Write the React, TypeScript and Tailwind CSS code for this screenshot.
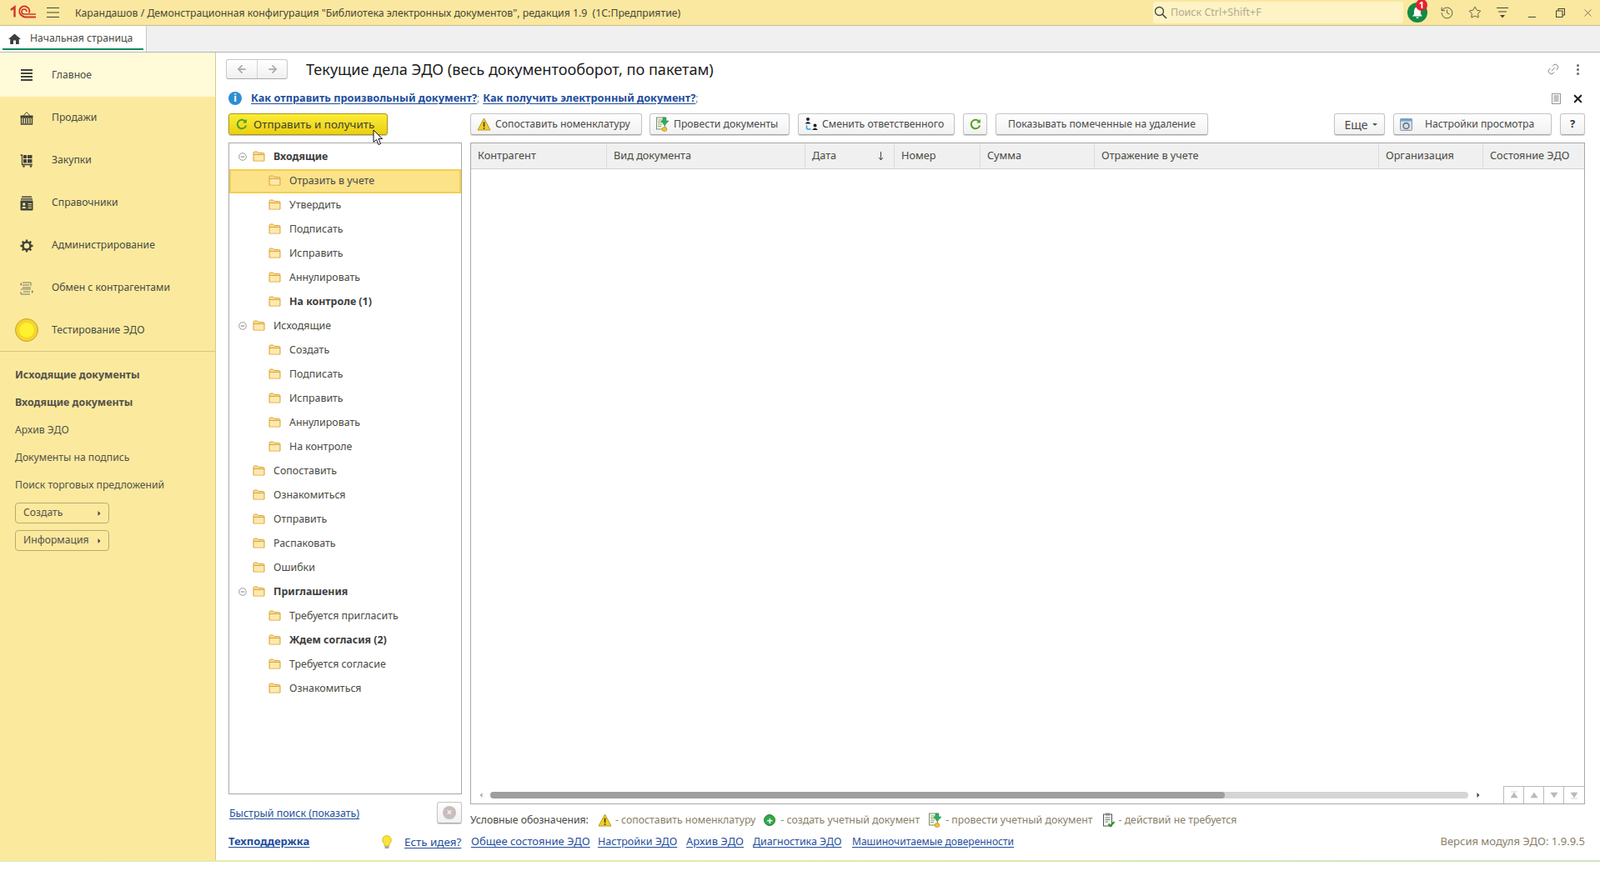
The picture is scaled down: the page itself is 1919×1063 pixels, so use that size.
import React from 'react';
import { ArrowLeft, ArrowRight, History, Link2, Star, X } from 'lucide-react';

const Folder: React.FC = () => (
  <svg width="15" height="13" viewBox="0 0 15 13" className="shrink-0">
    <path d="M1 2.5 Q1 1 2.5 1 H5.5 L7 2.5 H12.5 Q14 2.5 14 4 V12 H1 Z" fill="#FCDD8E" stroke="#D8A53E" strokeWidth="1" />
    <path d="M1 4.5 H14" stroke="#D8A53E" strokeWidth="1" />
    <rect x="2" y="5" width="11" height="6.5" fill="#FFE9AE" />
  </svg>
);

const Warning: React.FC = () => (
  <svg width="17" height="16" viewBox="0 0 17 16" className="shrink-0">
    <path d="M8.5 1 L16 15 H1 Z" fill="#F2CF2F" stroke="#B59A1E" strokeWidth="1" strokeLinejoin="round" />
    <rect x="7.7" y="5.5" width="1.7" height="5.5" fill="#4A3E10" />
    <rect x="7.7" y="12" width="1.7" height="1.7" fill="#4A3E10" />
  </svg>
);

const Refresh: React.FC<{ size?: number }> = ({ size = 14 }) => (
  <svg width={size} height={size} viewBox="0 0 14 14" className="shrink-0">
    <path d="M11.6 4.2 A5.3 5.3 0 1 0 12.2 8.5" fill="none" stroke="#4FA31A" strokeWidth="2" />
    <path d="M12.8 0.8 V5.6 H8.2 Z" fill="#4FA31A" />
  </svg>
);

const DocPost: React.FC = () => (
  <svg width="17" height="18" viewBox="0 0 17 18" className="shrink-0">
    <rect x="1.5" y="1" width="10" height="14" fill="#F4F7EE" stroke="#7E8F6A" />
    <path d="M3 4 H10 M3 6.5 H8 M3 9 H8 M3 11.5 H7" stroke="#8AA070" />
    <path d="M9 1 H13 V5 H16 L11 10.5 L7 5 H9 Z" fill="#2FAE5E" stroke="#1D7F44" strokeWidth="0.5" />
    <ellipse cx="11" cy="15" rx="3" ry="2.5" fill="#F2C230" stroke="#B58A18" strokeWidth="0.6" />
  </svg>
);

const DocDone: React.FC = () => (
  <svg width="17" height="18" viewBox="0 0 17 18" className="shrink-0">
    <rect x="2.5" y="2" width="10" height="14" fill="#F7F7F2" stroke="#555" />
    <rect x="5" y="0.5" width="5" height="3" fill="#888" />
    <path d="M4.5 6 H10.5 M4.5 8.5 H10.5 M4.5 11 H8" stroke="#777" />
    <path d="M8.5 13.5 L10.8 16 L15.5 11" fill="none" stroke="#1F9A2E" strokeWidth="2" />
  </svg>
);

const TeamSwap: React.FC = () => (
  <svg width="18" height="18" viewBox="0 0 18 18" className="shrink-0">
    <circle cx="5" cy="3" r="2" fill="#222" />
    <path d="M1.5 8.5 Q5 3.5 8.5 8.5 Z" fill="#222" />
    <circle cx="13.5" cy="10.5" r="2" fill="#222" />
    <path d="M10 16 Q13.5 11 17 16 Z" fill="#222" />
    <path d="M3.5 10.5 V14 Q3.5 15 6 15 H8.5" fill="none" stroke="#2F9FE0" strokeWidth="1.5" />
  </svg>
);

const Logo: React.FC = () => (
  <svg width="31" height="18" viewBox="0 0 31 18" className="shrink-0">
    <path d="M1 6 L5.5 2.5 V14.5" fill="none" stroke="#D1342B" strokeWidth="2.4" />
    <path d="M23 9.5 A6 6 0 1 0 14 12.5 Q15.5 14 18 14.5 H31" fill="none" stroke="#D1342B" strokeWidth="2" />
    <path d="M20 8 A3 3 0 1 0 17 11 H31" fill="none" stroke="#D1342B" strokeWidth="1.6" />
  </svg>
);

const icons: Record<string, React.ReactNode> = {
  main: (
    <svg width="16" height="16" viewBox="0 0 16 16"><path d="M1 2 H15 M1 6 H15 M1 10 H15 M1 14 H15" stroke="#43433B" strokeWidth="2" /></svg>
  ),
  sales: (
    <svg width="16" height="16" viewBox="0 0 16 16">
      <path d="M4 5 L8 0.5 L12 5" fill="none" stroke="#43433B" />
      <path d="M0.5 4.5 H15.5 V7 H0.5 Z" fill="#43433B" />
      <path d="M1.5 7 H14.5 V15 H1.5 Z M4 8 V14 M6.7 8 V14 M9.3 8 V14 M12 8 V14" fill="none" stroke="#43433B" strokeWidth="1.4" />
    </svg>
  ),
  buy: (
    <svg width="16" height="16" viewBox="0 0 16 16">
      <path d="M0.5 1 H2.5 V12.5 H15" fill="none" stroke="#43433B" strokeWidth="1.3" />
      <path d="M4 1 H8 V5 H4 Z M9 1 H14.5 V5 H9 Z M4 6 H8 V10.5 H4 Z M9 6 H14.5 V10.5 H9 Z" fill="#43433B" />
      <circle cx="4.5" cy="14.5" r="1.3" fill="#43433B" />
      <circle cx="13" cy="14.5" r="1.3" fill="#43433B" />
    </svg>
  ),
  ref: (
    <svg width="16" height="18" viewBox="0 0 16 18">
      <path d="M2 0.5 H14 V2 H2 Z" fill="#43433B" />
      <path d="M1 3 H15 V4.5 H1 Z" fill="#43433B" />
      <rect x="0.5" y="5.5" width="15" height="12" rx="1" fill="#43433B" />
      <circle cx="4.8" cy="10" r="1.7" fill="#FBEA9E" />
      <path d="M2 15 Q4.8 10.5 7.6 15 Z" fill="#FBEA9E" />
      <path d="M9.5 9.5 H14 M9.5 12 H14 M9.5 14.5 H14" stroke="#FBEA9E" />
    </svg>
  ),
  admin: (
    <svg width="16" height="16" viewBox="0 0 16 16">
      <circle cx="8" cy="8" r="4.5" fill="none" stroke="#43433B" strokeWidth="2.6" />
      <path d="M8 0.5 V3 M8 13 V15.5 M0.5 8 H3 M13 8 H15.5 M2.7 2.7 L4.5 4.5 M11.5 11.5 L13.3 13.3 M2.7 13.3 L4.5 11.5 M11.5 4.5 L13.3 2.7" stroke="#43433B" strokeWidth="2.4" />
    </svg>
  ),
  swap: (
    <svg width="16" height="16" viewBox="0 0 16 16">
      <path d="M3 1 H13 V5 M3 4 H11 M3 7 H13 M1 9 H13 M1 12 V15 H12 M4 12 H12" fill="none" stroke="#77776A" />
      <path d="M2 1 V5 L0 3 Z M14 10 V14 L16 12 Z" fill="#77776A" />
    </svg>
  ),
};

const navItems = [
  { label: 'Продажи', icon: 'sales' },
  { label: 'Закупки', icon: 'buy' },
  { label: 'Справочники', icon: 'ref' },
  { label: 'Администрирование', icon: 'admin' },
  { label: 'Обмен с контрагентами', icon: 'swap' },
];

const treeRows: { label: string; level: number; bold?: boolean; open?: boolean; active?: boolean }[] = [
  { label: 'Входящие', level: 1, bold: true, open: true },
  { label: 'Отразить в учете', level: 2, active: true },
  { label: 'Утвердить', level: 2 },
  { label: 'Подписать', level: 2 },
  { label: 'Исправить', level: 2 },
  { label: 'Аннулировать', level: 2 },
  { label: 'На контроле (1)', level: 2, bold: true },
  { label: 'Исходящие', level: 1, open: true },
  { label: 'Создать', level: 2 },
  { label: 'Подписать', level: 2 },
  { label: 'Исправить', level: 2 },
  { label: 'Аннулировать', level: 2 },
  { label: 'На контроле', level: 2 },
  { label: 'Сопоставить', level: 1 },
  { label: 'Ознакомиться', level: 1 },
  { label: 'Отправить', level: 1 },
  { label: 'Распаковать', level: 1 },
  { label: 'Ошибки', level: 1 },
  { label: 'Приглашения', level: 1, bold: true, open: true },
  { label: 'Требуется пригласить', level: 2 },
  { label: 'Ждем согласия (2)', level: 2, bold: true },
  { label: 'Требуется согласие', level: 2 },
  { label: 'Ознакомиться', level: 2 },
];

const columns = [
  { label: 'Контрагент', w: 'w-[163px]' },
  { label: 'Вид документа', w: 'w-[238px]' },
  { label: 'Дата', w: 'w-[107px]', sort: true },
  { label: 'Номер', w: 'w-[103px]' },
  { label: 'Сумма', w: 'w-[137px]' },
  { label: 'Отражение в учете', w: 'w-[341px]' },
  { label: 'Организация', w: 'w-[125px]' },
  { label: 'Состояние ЭДО', w: 'flex-1' },
];

const bottomLinks = [
  { label: 'Есть идея?', cls: 'w-[80px] text-[13.4px]' },
  { label: 'Общее состояние ЭДО', cls: 'w-[152px] text-[13px]' },
  { label: 'Настройки ЭДО', cls: 'w-[106px] text-[12.5px]' },
  { label: 'Архив ЭДО', cls: 'w-[80px] text-[13px]' },
  { label: 'Диагностика ЭДО', cls: 'w-[119px] text-[12.4px]' },
  { label: 'Машиночитаемые доверенности', cls: 'text-[12px]' },
];

const btn =
  'h-[26px] flex items-center rounded-[3px] border border-[#c4c4c4] border-b-[#a8a8a8] bg-gradient-to-b from-white to-[#f1f1f1] shadow-[0_1px_1px_rgba(0,0,0,0.18)] text-[#4a4a4a] text-[12.2px] shrink-0';
const link = 'text-[#1F4E9C] underline underline-offset-2';

const App: React.FC = () => {
  return (
    <div className="w-[1919px] h-[1063px] flex flex-col bg-white overflow-hidden text-[12.2px] text-[#4a4a44] [font-family:'Liberation_Sans',Arial,sans-serif]">
      {/* top bar */}
      <div className="h-[31px] shrink-0 flex items-center bg-[#FAE8A0] border-b border-[#C9BE8C]">
        <div className="w-[90px] shrink-0 flex items-center pl-[12px] gap-[13px]">
          <Logo />
          <svg width="15" height="14" viewBox="0 0 15 14"><path d="M0 1.5 H15 M0 7 H15 M0 12.5 H15" stroke="#4A4430" strokeWidth="1.2" /></svg>
        </div>
        <div className="flex-1 min-w-0 text-[#4a4638] text-[12.25px] whitespace-nowrap pt-[2px]">
          Карандашов / Демонстрационная конфигурация "Библиотека электронных документов", редакция 1.9&nbsp; (1С:Предприятие)
        </div>
        <div className="w-[300px] h-[26px] rounded-[3px] bg-[#FDF3C4] flex items-center pl-[1px] gap-[4px] text-[#b0ab95] text-[12.5px]">
          <svg width="16" height="16" viewBox="0 0 16 16"><circle cx="6.5" cy="6.5" r="5" fill="none" stroke="#444" strokeWidth="1.3" /><path d="M10 10 L15 15" stroke="#444" strokeWidth="1.6" /></svg>
          Поиск Ctrl+Shift+F
        </div>
        <div className="relative ml-[5px] w-[24px] h-[24px] rounded-full bg-[#128A45] flex items-center justify-center">
          <svg width="16" height="16" viewBox="0 0 16 16"><path d="M8 1 Q12 2 12 7 V10 L14 12.5 H2 L4 10 V7 Q4 2 8 1 Z M6 13.5 H10 L8 15.5 Z" fill="#fff" /></svg>
          <span className="absolute -top-[4px] left-[10px] w-[14px] h-[14px] rounded-full bg-[#E5222E] text-white text-[11px] font-bold leading-[14px] text-center">1</span>
        </div>
        <History className="ml-[15px] text-[#4a4638]" size={17} strokeWidth={1.2} />
        <Star className="ml-[17px] text-[#4a4638]" size={16} strokeWidth={1.3} />
        <svg className="ml-[17px]" width="16" height="14" viewBox="0 0 16 14"><path d="M1 1.5 H15 M3 6 H13" stroke="#4a4638" strokeWidth="1.2" /><path d="M5 10 H11 L8 13.5 Z" fill="#4a4638" /></svg>
        <div className="ml-[18px] w-[18px] flex justify-center pt-[11px]"><div className="w-[9px] h-[1.5px] bg-[#4a4638]" /></div>
        <svg className="ml-[20px]" width="11" height="11" viewBox="0 0 11 11"><path d="M0.5 3 H8 V10.5 H0.5 Z M3 3 V0.5 H10.5 V8 H8" fill="none" stroke="#4a4638" strokeWidth="1.1" /></svg>
        <X className="ml-[20px] mr-[7px] text-[#4a4638]" size={15} strokeWidth={1.1} />
      </div>

      {/* tabs */}
      <div className="h-[32px] shrink-0 flex bg-[#F0F0F0] border-b border-[#B4B4B4]">
        <div className="w-[176px] bg-white border-r border-[#C8C8C8] px-[3px] flex flex-col">
          <div className="flex-1 flex items-center pl-[7px] gap-[11px] pt-[3px] text-[#4a4a44]">
            <svg width="15" height="13" viewBox="0 0 15 13"><path d="M7.5 0.5 L15 7 H12.8 V13 H9 V8.5 H6 V13 H2.2 V7 H0 Z" fill="#3E3E3E" /></svg>
            <span>Начальная страница</span>
          </div>
          <div className="h-[2px] mb-[2px] bg-[#128A55]" />
        </div>
      </div>

      {/* body */}
      <div className="h-[969px] shrink-0 flex">
        <aside className="w-[259px] shrink-0 bg-[#FBEA9E] border-r border-[#D7C98C] flex flex-col">
          <div className="h-[53px] pt-[1px] bg-[#FFFBD8] flex items-center">
            <div className="w-[62px] pl-[24px]">{icons.main}</div>
            Главное
          </div>
          {navItems.map((n) => (
            <div key={n.label} className="h-[51px] flex items-center">
              <div className="w-[62px] pl-[24px]">{icons[n.icon]}</div>
              {n.label}
            </div>
          ))}
          <div className="h-[51px] flex items-center border-b border-[#D9C67E]">
            <div className="w-[62px] pl-[18px]">
              <div className="w-[28px] h-[28px] rounded-full bg-[#F6D32E] border border-[#C9A21F] flex items-center justify-center">
                <div className="w-[18px] h-[18px] rounded-full bg-[#FFF12E]" />
              </div>
            </div>
            Тестирование ЭДО
          </div>
          <div className="pl-[18px] pt-[12px] flex flex-col text-[#55524a]">
            <div className="h-[33px] flex items-center font-bold text-[12.4px]">Исходящие документы</div>
            <div className="h-[33px] flex items-center font-bold text-[12.4px]">Входящие документы</div>
            <div className="h-[33px] flex items-center">Архив ЭДО</div>
            <div className="h-[33px] flex items-center">Документы на подпись</div>
            <div className="h-[33px] flex items-center">Поиск торговых предложений</div>
            {['Создать', 'Информация'].map((b, i) => (
              <div key={b} className={`w-[113px] h-[25px] rounded-[4px] border border-[#B8AB72] flex items-center justify-between px-[9px] ${i === 0 ? 'mt-[4px]' : 'mt-[8px]'}`}>
                {b}
                <svg width="4" height="6" viewBox="0 0 4 6"><path d="M0.5 0 L3.5 3 L0.5 6 Z" fill="#4a4a44" /></svg>
              </div>
            ))}
          </div>
        </aside>

        <main className="flex-1 min-w-0 flex flex-col pl-[1px] pr-[18px]">
          {/* title row */}
          <div className="h-[24px] mt-[8px] pl-[11px] flex items-center">
            <div className="w-[74px] h-[24px] flex rounded-[3px] border border-[#c8c8c8] border-b-[#aaa] bg-gradient-to-b from-white to-[#f0f0f0]">
              <div className="w-[37px] flex items-center justify-center border-r border-[#d4d4d4]"><ArrowLeft size={14} strokeWidth={3} className="text-[#aaaaaa]" /></div>
              <div className="flex-1 flex items-center justify-center"><ArrowRight size={14} strokeWidth={3} className="text-[#aaaaaa]" /></div>
            </div>
            <h1 className="ml-[22px] flex-1 pt-[1px] text-[18.1px] text-[#1c1c1c] whitespace-nowrap">Текущие дела ЭДО (весь документооборот, по пакетам)</h1>
            <Link2 size={16} strokeWidth={1} className="text-[#555] -rotate-45 mr-[20px]" />
            <div className="flex flex-col gap-[2px] mr-[7px]">
              <div className="w-[3px] h-[3px] rounded-full bg-[#666]" />
              <div className="w-[3px] h-[3px] rounded-full bg-[#666]" />
              <div className="w-[3px] h-[3px] rounded-full bg-[#666]" />
            </div>
          </div>

          {/* info row */}
          <div className="h-[20px] mt-[13px] pl-[14px] flex items-center">
            <div className="w-[16px] h-[16px] rounded-full bg-[#2E8FD0] text-white text-[12px] font-bold leading-[16px] text-center [font-family:'Liberation_Serif',serif]">i</div>
            <a className={`${link} ml-[11px] font-bold text-[12.75px]`}>Как отправить произвольный документ?</a>
            <span className="text-[#888]">;</span>
            <a className={`${link} ml-[4px] font-bold text-[12.75px]`}>Как получить электронный документ?</a>
            <span className="text-[#888]">;</span>
            <div className="flex-1" />
            <svg className="mr-[13px]" width="11" height="13" viewBox="0 0 11 13"><rect x="0.5" y="0.5" width="10" height="12" fill="#fafafa" stroke="#999" /><path d="M2.5 3 H8.5 M2.5 5 H8.5 M2.5 7 H8.5 M2.5 9 H8.5" stroke="#888" /></svg>
            <X size={15} strokeWidth={3.4} className="text-[#222] mr-[1px]" />
          </div>

          {/* command row */}
          <div className="h-[26px] mt-[8px] pl-[14px] flex items-center">
            <div className="relative w-[191px] h-[26px] flex items-center pl-[8px] gap-[7px] rounded-[3px] border border-[#A8951F] bg-gradient-to-b from-[#FBEC36] to-[#EBD00C] shadow-[0_1px_1px_rgba(0,0,0,0.25)] text-[#3f3f30] shrink-0">
              <Refresh />
              <span className="text-[13.4px]">Отправить и получить</span>
              <svg className="absolute left-[172px] top-[18px]" width="13" height="20" viewBox="0 0 13 20"><path d="M1 1 V15.5 L4.5 12.5 L7 18.5 L9.5 17.5 L7 11.5 H11.5 Z" fill="#fff" stroke="#111" strokeWidth="1" /></svg>
            </div>
            <div className={`${btn} ml-[99px] w-[206px] pl-[7px] gap-[5px]`}><Warning /><span>Сопоставить номенклатуру</span></div>
            <div className={`${btn} ml-[9px] w-[168px] pl-[6px] gap-[5px]`}><DocPost /><span>Провести документы</span></div>
            <div className={`${btn} ml-[10px] w-[188px] pl-[6px] gap-[4px]`}><TeamSwap /><span>Сменить ответственного</span></div>
            <div className={`${btn} ml-[10px] w-[29px] justify-center`}><Refresh /></div>
            <div className={`${btn} ml-[10px] w-[255px] justify-center`}><span>Показывать помеченные на удаление</span></div>
            <div className="flex-1" />
            <div className={`${btn} w-[61px] pl-[3px] justify-center gap-[5px]`}><span className="text-[14px]">Еще</span><svg width="6" height="3" viewBox="0 0 6 3"><path d="M0 0 H6 L3 3 Z" fill="#555" /></svg></div>
            <div className={`${btn} ml-[10px] w-[190px] pl-[7px] gap-[15px]`}>
              <svg width="15" height="15" viewBox="0 0 15 15" className="shrink-0"><rect x="0.5" y="0.5" width="14" height="14" rx="1" fill="#D9DEE6" stroke="#8A97AA" /><rect x="0.5" y="0.5" width="14" height="3" fill="#6AA6D8" /><circle cx="7.5" cy="9" r="3.4" fill="none" stroke="#6C7686" strokeWidth="1.6" /></svg>
              <span>Настройки просмотра</span>
            </div>
            <div className={`${btn} ml-[10px] w-[30px] justify-center font-bold text-[#333] text-[13px]`}>?</div>
          </div>

          {/* panels */}
          <div className="h-[824px] mt-[9px] pl-[14px] flex">
            <div className="w-[280px] shrink-0 flex flex-col">
              <div className="h-[782px] border border-[#A9A9A9] pt-[1.5px]">
                {treeRows.map((r, i) => (
                  <div
                    key={i}
                    className={`h-[29px] flex items-center ${r.active ? 'bg-[#FCE38A] border-2 border-[#F5CF4C]' : ''}`}
                  >
                    <div className={`flex items-center gap-[10px] ${r.level === 1 ? 'pl-[28px]' : r.active ? 'pl-[45px]' : 'pl-[47px]'} relative`}>
                      {r.open && (
                        <svg className="absolute left-[11px]" width="10" height="10" viewBox="0 0 10 10"><circle cx="5" cy="5" r="4.3" fill="none" stroke="#9a9a9a" /><path d="M2.8 5 H7.2" stroke="#777" /></svg>
                      )}
                      <Folder />
                      <span className={`text-[12.4px] ${r.bold ? 'font-bold text-[#3d3d3d]' : 'text-[#4a4a44]'}`}>{r.label}</span>
                    </div>
                  </div>
                ))}
              </div>
              <div className="mt-[9px] h-[26px] flex items-center justify-between">
                <a className={`${link} pl-[1px] pt-[2px] text-[12.4px]`}>Быстрый поиск (показать)</a>
                <div className={`${btn} w-[30px] justify-center`}>
                  <div className="w-[16px] h-[16px] rounded-full bg-[#C9BDBD] text-white text-[12px] leading-[16px] text-center">×</div>
                </div>
              </div>
            </div>

            <div className="flex-1 min-w-0 ml-[10px] flex flex-col">
              <div className="h-[794px] border border-[#A9A9A9] flex flex-col">
                <div className="h-[31px] bg-[#F0F0F0] border-b border-[#CFCFCF] flex text-[12.7px]">
                  {columns.map((c) => (
                    <div key={c.label} className={`${c.w} pl-[8px] pr-[12px] flex items-center justify-between border-r border-[#DADADA] last:border-r-0`}>
                      {c.label}
                      {c.sort && (
                        <svg width="7" height="11" viewBox="0 0 7 11"><path d="M3.5 0 V9.5 M1 7 L3.5 10 L6 7" fill="none" stroke="#444" /></svg>
                      )}
                    </div>
                  ))}
                </div>
                <div className="flex-1" />
                <div className="h-[21px] flex items-center">
                  <svg className="ml-[10px]" width="4" height="6" viewBox="0 0 4 6"><path d="M3.5 0 L0.5 3 L3.5 6 Z" fill="#aaa" /></svg>
                  <div className="ml-[9px] w-[1173px] h-[8px] rounded-full bg-[#D4D4D4]">
                    <div className="w-[881px] h-[8px] rounded-full bg-[#9E9E9E]" />
                  </div>
                  <svg className="ml-[10px]" width="4" height="6" viewBox="0 0 4 6"><path d="M0.5 0 L3.5 3 L0.5 6 Z" fill="#444" /></svg>
                  <div className="flex-1" />
                  <div className="h-[21px] flex border-l border-t border-[#BBBBBB]">
                    {['M1 1 H9 M5 2 L9 8 H1 Z', 'M5 2 L9 8 H1 Z', 'M1 2 H9 L5 8 Z', 'M1 2 H9 L5 8 Z M1 9 H9'].map((d, i) => (
                      <div key={i} className="w-[24px] flex items-center justify-center border-r border-[#BBBBBB] last:border-r-0">
                        <svg width="10" height="10" viewBox="0 0 10 10"><path d={d} fill="#B9B9B9" stroke="#B9B9B9" strokeWidth="0.6" /></svg>
                      </div>
                    ))}
                  </div>
                </div>
              </div>
              <div className="mt-[9px] h-[20px] flex items-center text-[#8a8068] text-[12.3px] whitespace-nowrap">
                <span className="text-[#4a4a44] text-[12.2px]">Условные обозначения:</span>
                <span className="ml-[11px] mr-[4px]"><Warning /></span>- сопоставить номенклатуру
                <span className="ml-[10px] mr-[6px] w-[14px] h-[14px] rounded-full bg-[#35A64A] border border-[#23813A] flex items-center justify-center text-white text-[13px] font-bold leading-none">+</span>- создать учетный документ
                <span className="ml-[10px] mr-[4px]"><DocPost /></span>- провести учетный документ
                <span className="ml-[11px] mr-[3px]"><DocDone /></span>- действий не требуется
              </div>
            </div>
          </div>

          {/* bottom links */}
          <div className="h-[20px] mt-[5px] pl-[14px] flex items-center whitespace-nowrap">
            <div className="w-[184px]"><a className={`${link} font-bold text-[13px]`}>Техподдержка</a></div>
            <svg className="mr-[15px]" width="12" height="17" viewBox="0 0 12 17"><path d="M6 0.5 A5.5 5.5 0 0 1 9 10.5 V13 H3 V10.5 A5.5 5.5 0 0 1 6 0.5 Z" fill="#F8E43A" stroke="#D9BE2A" /><rect x="3.5" y="13" width="5" height="3" fill="#A8A8A8" /></svg>
            {bottomLinks.map((l) => (
              <div key={l.label} className={l.cls}><a className={link}>{l.label}</a></div>
            ))}
            <div className="flex-1" />
            <span className="text-[#8a8068] text-[13px]">Версия модуля ЭДО: 1.9.9.5</span>
          </div>
        </main>
      </div>

      <div className="h-[2px] shrink-0 bg-gradient-to-r from-[#E5EDB0] via-[#E0EAA8] to-[#CBE6C0]" />
      <div className="flex-1 bg-white" />
    </div>
  );
};

export default App;
